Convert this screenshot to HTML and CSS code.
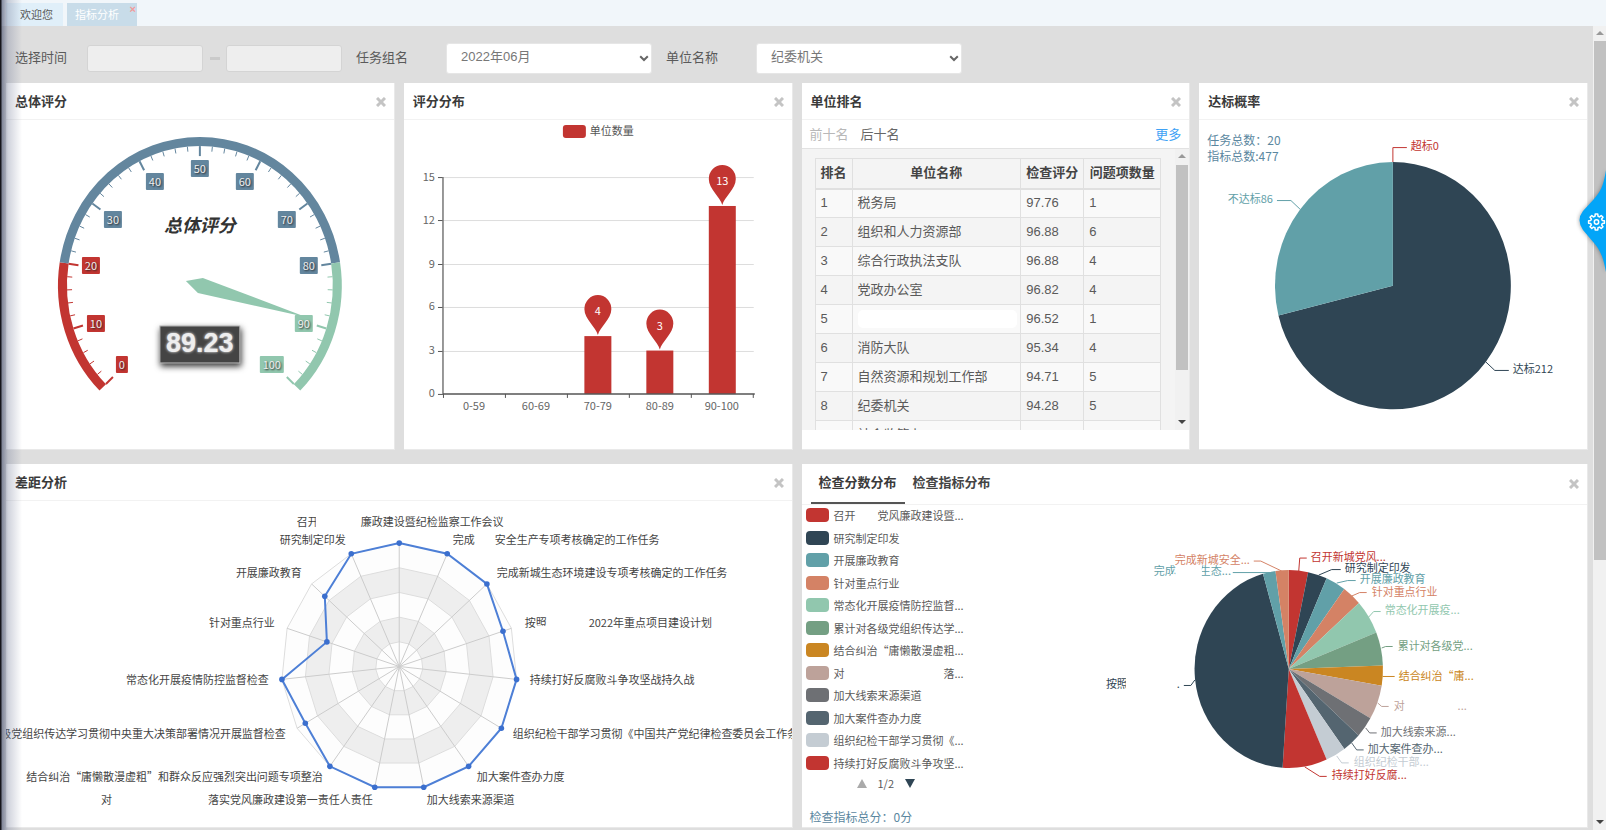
FILE: index.html
```html
<!DOCTYPE html>
<html lang="zh-CN">
<head>
<meta charset="utf-8">
<title>指标分析</title>
<link rel="stylesheet" href="styles.css">
</head>
<body>
<nav class="tabs">
  <button class="tab">欢迎您</button>
  <button class="tab tab-active">指标分析<span class="tab-close">×</span></button>
</nav>
<div class="frame">
  <main class="page">
    <form class="filters">
      <label class="f-label" for="from">选择时间</label>
      <input class="f-input" id="from" type="text">
      <span class="f-dash"></span>
      <input class="f-input" id="to" type="text" aria-label="结束时间">
      <label class="f-label f-label-wide" for="group">任务组名</label>
      <span class="select-wrap"><select class="f-select" id="group"><option>2022年06月</option></select><svg class="caret" viewBox="0 0 10 7"><path d="M1.2 1.2 5 5l3.8-3.8"/></svg></span>
      <label class="f-label f-label-wide" for="unit">单位名称</label>
      <span class="select-wrap"><select class="f-select" id="unit"><option>纪委机关</option></select><svg class="caret" viewBox="0 0 10 7"><path d="M1.2 1.2 5 5l3.8-3.8"/></svg></span>
    </form>

    <div class="grid">
      <section class="panel">
        <header class="head"><h2>总体评分</h2><button class="close" aria-label="关闭"><svg viewBox="0 0 10 10"><path d="M1 1l8 8M9 1 1 9"/></svg></button></header>
        <svg class="chart" id="gauge" viewBox="6 120 388 326"></svg>
      </section>

      <section class="panel">
        <header class="head"><h2>评分分布</h2><button class="close" aria-label="关闭"><svg viewBox="0 0 10 10"><path d="M1 1l8 8M9 1 1 9"/></svg></button></header>
        <svg class="chart" id="bars" viewBox="404 120 388 326"></svg>
      </section>

      <section class="panel">
        <header class="head"><h2>单位排名</h2><button class="close" aria-label="关闭"><svg viewBox="0 0 10 10"><path d="M1 1l8 8M9 1 1 9"/></svg></button></header>
        <div class="rank-bar">
          <button class="link-btn muted">前十名</button>
          <button class="link-btn">后十名</button>
          <a class="more" href="#">更多</a>
        </div>
        <div class="rank-body">
          <div class="rank-scroll">
            <table class="rank">
              <colgroup><col class="c1"><col><col class="c3"><col class="c4"></colgroup>
              <thead><tr><th>排名</th><th>单位名称</th><th>检查评分</th><th>问题项数量</th></tr></thead>
              <tbody>
                <tr><td>1</td><td>税务局</td><td>97.76</td><td>1</td></tr>
                <tr><td>2</td><td>组织和人力资源部</td><td>96.88</td><td>6</td></tr>
                <tr><td>3</td><td>综合行政执法支队</td><td>96.88</td><td>4</td></tr>
                <tr><td>4</td><td>党政办公室</td><td>96.82</td><td>4</td></tr>
                <tr><td>5</td><td><span class="blank"></span></td><td>96.52</td><td>1</td></tr>
                <tr><td>6</td><td>消防大队</td><td>95.34</td><td>4</td></tr>
                <tr><td>7</td><td>自然资源和规划工作部</td><td>94.71</td><td>5</td></tr>
                <tr><td>8</td><td>纪委机关</td><td>94.28</td><td>5</td></tr>
                <tr><td></td><td>社会监管办</td><td></td><td></td></tr>
              </tbody>
            </table>
          </div>
          <div class="bar"><i class="up"></i><i class="thumb thumb-rank"></i><i class="down"></i></div>
        </div>
      </section>

      <section class="panel">
        <header class="head"><h2>达标概率</h2><button class="close" aria-label="关闭"><svg viewBox="0 0 10 10"><path d="M1 1l8 8M9 1 1 9"/></svg></button></header>
        <div class="stacked">
          <p class="totals">任务总数：20<br>指标总数:477</p>
          <svg class="chart" id="rate" viewBox="1199 120 388 326"></svg>
        </div>
      </section>

      <section class="panel panel-wide panel-low">
        <header class="head"><h2>差距分析</h2><button class="close" aria-label="关闭"><svg viewBox="0 0 10 10"><path d="M1 1l8 8M9 1 1 9"/></svg></button></header>
        <svg class="chart" id="radar" viewBox="6 501 786 326"></svg>
      </section>

      <section class="panel panel-wide panel-low">
        <header class="head head-tabs">
          <button class="sub sub-active">检查分数分布</button>
          <button class="sub">检查指标分布</button>
          <button class="close" aria-label="关闭"><svg viewBox="0 0 10 10"><path d="M1 1l8 8M9 1 1 9"/></svg></button>
        </header>
        <div class="split">
          <div class="side">
            <ul class="legend" id="legend"></ul>
            <div class="pager"><i class="pg-up"></i><span>1/2</span><i class="pg-down"></i></div>
            <p class="sum">检查指标总分：0分</p>
          </div>
          <svg class="chart chart-pie" id="pie" viewBox="990 505 598 290"></svg>
        </div>
      </section>
    </div>
  </main>
  <div class="bar bar-page"><i class="up"></i><i class="thumb thumb-page"></i><i class="down"></i></div>
</div>
<div class="edge"></div>
<button class="drawer" aria-label="设置">
  <svg viewBox="1576 168 30 106">
    <path class="drawer-bg" d="M1606 170C1603 188 1600 192 1594 199L1583 211Q1576 220 1583 230L1594 243C1600 250 1603 256 1606 272Z"/>
    <g id="gear"></g>
  </svg>
</button>
<script src="charts.js"></script>
</body>
</html>
```
FILE: styles.css
```css
* { box-sizing: border-box; }
html, body { height: 100%; }
body {
  margin: 0;
  display: flex;
  flex-direction: column;
  overflow: hidden;
  background: #dedede;
  color: #5a5a5a;
  font: 13px/20px "Liberation Sans", "Noto Sans CJK SC", sans-serif;
}
button { border: 0; padding: 0; background: none; font: inherit; color: inherit; }
h2, p, ul { margin: 0; padding: 0; }

.tabs {
  flex: none;
  display: flex;
  align-items: flex-end;
  gap: 4px;
  height: 26px;
  padding-left: 6px;
  background: #f1f6fa;
}
.tab {
  position: relative;
  height: 23px;
  padding: 0 10px 0 14px;
  background: #e0eff9;
  font-size: 11px;
}
.tab-active { padding: 0 18px 0 8px; background: #c8dce9; color: #fff; }
.tab-close {
  position: absolute;
  top: 1px;
  right: 1px;
  color: #f39a9a;
  font-weight: bold;
  line-height: 11px;
}

.frame { flex: 1; min-height: 0; display: flex; }
.page { flex: 1; min-width: 0; padding: 0 5px 0 6px; overflow: hidden; }

.filters { display: flex; align-items: center; height: 57px; padding: 8px 0 1px 9px; }
.f-label { width: 72px; }
.f-label-wide { width: 90px; margin-left: 14px; }
.f-input {
  width: 116px;
  height: 27px;
  border: 1px solid #d4d4d4;
  border-radius: 3px;
  background: #eee;
}
.f-dash { width: 10px; height: 3px; margin: 0 6px 0 7px; background: #cacaca; }
.select-wrap { position: relative; display: flex; }
.f-select {
  width: 206px;
  height: 31px;
  padding: 0 14px 2px;
  border: 1px solid #e6e6e6;
  border-radius: 3px;
  background: #fff;
  color: #777;
  font: inherit;
  appearance: none;
}
.caret { position: absolute; right: 3px; top: 12px; width: 10px; height: 7px; fill: none; stroke: #666; stroke-width: 2; pointer-events: none; }

.grid { display: grid; grid-template-columns: repeat(4, minmax(0, 1fr)); gap: 14px 9px; }
.panel { height: 367px; background: #fff; border: 1px solid #e9e9e9; border-width: 0 1px 1px 0; overflow: hidden; }
.panel-low { height: 364px; }
.panel-wide { grid-column: span 2; }
.head {
  display: flex;
  align-items: center;
  justify-content: space-between;
  height: 37px;
  padding: 1px 8px 0 9px;
  border-bottom: 1px solid #f2f2f2;
}
.head h2 { font-size: 13px; color: #3a3a3a; }
.close { width: 10px; height: 10px; display: block; }
.close svg { display: block; fill: none; stroke: #c4c4c4; stroke-width: 3; }
.chart { display: block; width: 100%; height: 326px; }
.chart text { font-family: "Noto Sans CJK SC", "Noto Sans", sans-serif; font-size: 11px; dominant-baseline: central; }

.rank-bar { display: flex; align-items: center; gap: 12px; height: 29px; padding: 2px 8px 0; border-bottom: 1px solid #e2e2e2; color: #666; }
.muted { color: #b8b8b8; }
.more { margin-left: auto; color: #3fa2f5; text-decoration: none; }
.rank-body { display: flex; height: 281px; background: #f4f4f4; }
.rank-scroll { flex: 1; padding: 9px 14px 0 13px; overflow: hidden; }
.rank { width: 100%; table-layout: fixed; border-collapse: collapse; }
.c1 { width: 37px; }
.c3 { width: 63px; }
.c4 { width: 77px; }
.rank th, .rank td { height: 29px; padding: 0 5px; border: 1px solid #e0e0e0; text-align: left; white-space: nowrap; }
.rank th { height: 30px; text-align: center; color: #444; border-bottom-width: 2px; }
.rank tbody tr:nth-child(odd) { background: #f9f9f9; }
.blank { display: block; height: 18px; border-radius: 5px; background: #fff; margin-right: -2px; }

.bar { display: flex; flex-direction: column; align-items: center; width: 14px; padding: 5px 0 6px; background: #f1f1f1; }
.bar i { display: block; }
.up { border: 4px solid transparent; border-top: 0; border-bottom-color: #999; }
.down { margin-top: auto; border: 4px solid transparent; border-bottom: 0; border-top-color: #444; }
.thumb { width: 12px; background: #c1c1c1; }
.thumb-rank { height: 205px; margin-top: 7px; }
.thumb-page { height: 519px; margin-top: 6px; }
.bar-page { width: 13px; }

.stacked { display: grid; }
.stacked > * { grid-area: 1 / 1; }
.totals { padding: 12px 8px; font: 12px/16px "Noto Sans CJK SC", sans-serif; color: #5b87a0; }

.head-tabs { justify-content: flex-start; gap: 0; height: 41px; padding-top: 0; }
.sub { height: 40px; padding: 0 8px; font-weight: bold; color: #444; border-bottom: 2px solid transparent; }
.sub-active { border-bottom-color: #555; color: #3a3a3a; }
.head-tabs .close { margin-left: auto; }
.split { display: grid; grid-template-columns: 188px minmax(0, 1fr); }
.chart-pie { height: 290px; }
.side { font-family: "Noto Sans CJK SC", sans-serif; }
.legend { display: grid; grid-template-rows: repeat(12, 1fr); height: 270px; margin-top: -1px; list-style: none; font-size: 11px; }
.legend li { display: flex; align-items: center; gap: 5px; padding-left: 4px; white-space: pre; }
.swatch { width: 23px; height: 14px; border-radius: 4px; }
.pager { display: flex; align-items: center; gap: 11px; height: 18px; padding-left: 55px; font-size: 11px; }
.pg-up { border: 5px solid transparent; border-top: 0; border-bottom: 9px solid #aaa; }
.pg-down { border: 5px solid transparent; border-bottom: 0; border-top: 9px solid #2f4554; }
.sum { padding: 15px 8px 0; font-size: 12px; color: #5b87a0; }

.edge {
  position: absolute;
  inset: 0 auto 0 0;
  width: 22px;
  pointer-events: none;
  background: linear-gradient(90deg, #16161c 0, #16161c 1px, rgba(90, 98, 125, .7) 2px, rgba(120, 128, 155, .35) 8px, rgba(150, 158, 180, 0) 22px);
}
.drawer { position: absolute; right: 0; top: 168px; width: 30px; height: 106px; }
.drawer svg { display: block; width: 30px; height: 106px; }
.drawer-bg { fill: #03a5f8; filter: drop-shadow(0 0 2px rgba(0, 0, 0, .4)); }

.chart .value { font-family: "Liberation Sans", sans-serif; font-size: 27px; font-weight: bold; fill: #eee; text-shadow: 0 0 3px #fff; }
.value-box { fill: #444; stroke: #bbb; filter: drop-shadow(1px 3px 3px rgba(0, 0, 0, .8)); }
.chart .gauge-title { font-size: 18px; font-weight: bold; font-style: italic; fill: #333; }
.chart .gauge-num { fill: #eee; text-shadow: 1px 1px 2px #222; }
```
FILE: charts.js
```js
const PALETTE = ['#c23531', '#2f4554', '#61a0a8', '#d48265', '#91c7ae', '#749f83', '#ca8622', '#bda29a', '#6e7074', '#546570', '#c4ccd3', '#c23531', '#2f4554', '#61a0a8', '#d48265'];
const at = (cx, cy, rx, ry, deg) => {
  const a = deg * Math.PI / 180;
  return [(cx + rx * Math.sin(a)).toFixed(1), (cy - ry * Math.cos(a)).toFixed(1)];
};
const text = (x, y, s, fill, anchor = 'start', cls = '') =>
  `<text x="${x}" y="${y}" fill="${fill}" text-anchor="${anchor}" class="${cls}">${s}</text>`;
const line = (pts, color, w = 1) => `<polyline points="${pts}" fill="none" stroke="${color}" stroke-width="${w}"/>`;
const patch = (x, y, w, h) => `<rect x="${x}" y="${y}" width="${w}" height="${h}" fill="#fff"/>`;
const slice = (cx, cy, rx, ry, a, b, fill) =>
  `<path d="M${cx} ${cy}L${at(cx, cy, rx, ry, a)}A${rx} ${ry} 0 ${b - a > 180 ? 1 : 0} 1 ${at(cx, cy, rx, ry, b)}Z" fill="${fill}"/>`;
const put = (id, html) => { document.getElementById(id).innerHTML = html; };

function gauge() {
  const cx = 200, cy = 285.5;
  const color = v => v <= 20 ? '#c23531' : v <= 80 ? '#63869e' : '#91c7ae';
  const ang = v => -135 + v * 2.7;
  let out = '';
  for (const [a, b] of [[0, 20], [20, 80], [80, 100]]) {
    out += `<path d="M${at(cx, cy, 137.5, 144.2, ang(a))}A137.5 144.2 0 0 1 ${at(cx, cy, 137.5, 144.2, ang((a + b) / 2))}A137.5 144.2 0 0 1 ${at(cx, cy, 137.5, 144.2, ang(b))}" fill="none" stroke="${color(b)}" stroke-width="9"/>`;
  }
  for (let v = 0; v <= 100; v += 2) {
    const major = v % 10 === 0, len = major ? 10 : 5;
    out += line(`${at(cx, cy, 133, 139.5, ang(v))} ${at(cx, cy, 133 - len, 139.5 - len, ang(v))}`, color(v), major ? 2 : 1);
  }
  out += '<path d="M186 281L203 278L306 317L198 293Z" fill="#91c7ae"/>';
  [[0, 122, 365], [10, 96, 324], [20, 91, 266], [30, 113, 220], [40, 155, 182], [50, 200, 169], [60, 245, 182], [70, 287, 220], [80, 309, 266], [90, 304, 324], [100, 272, 365]].forEach(([v, x, y]) => {
    const w = v === 0 ? 12 : v === 100 ? 24 : 18;
    out += `<rect x="${x - w / 2}" y="${y - 9}" width="${w}" height="17" rx="1" fill="${color(v)}"/>` + text(x, y - 1, v, '#eee', 'middle', 'gauge-num');
  });
  out += text(200, 224, '总体评分', '#333', 'middle', 'gauge-title');
  out += '<rect class="value-box" x="160" y="326" width="80" height="37"/>' + text(200, 343, '89.23', '#eee', 'middle', 'value');
  put('gauge', out);
}

function bars() {
  const base = 394, unit = 14.467;
  let out = '<rect x="563" y="125" width="23" height="13" rx="3" fill="#c23531"/>' + text(590, 130, '单位数量', '#555');
  for (let v = 0; v <= 15; v += 3) {
    const y = Math.round(base - v * unit) + .5;
    if (v) out += line(`443,${y} 754,${y}`, '#ddd');
    out += line(`438,${y} 443,${y}`, '#555') + text(435, y - 2, v, '#666', 'end');
  }
  ['0-59', '60-69', '70-79', '80-89', '90-100'].forEach((s, i) => {
    out += text(474 + i * 62, 405, s, '#666', 'middle') + line(`${505.5 + i * 62},394 ${505.5 + i * 62},398`, '#555');
  });
  [[598, 4], [660, 3], [722.5, 13]].forEach(([x, v]) => {
    const top = base - v * unit, y = top - 27;
    out += `<rect x="${x - 13.5}" y="${top}" width="27" height="${v * unit}" fill="#c23531"/>`;
    out += `<path d="M${x} ${top - 1}C${x - 2} ${top - 9} ${x - 13.5} ${y + 10} ${x - 13.5} ${y}A13.5 14 0 1 1 ${x + 13.5} ${y}C${x + 13.5} ${y + 10} ${x + 2} ${top - 9} ${x} ${top - 1}Z" fill="#c23531"/>`;
    out += text(x, y + 1, v, '#fff', 'middle');
  });
  out += line('443,177 443,394', '#777', 1.5) + line('443,394 755,394', '#555', 1.5) + line('443.5,394 443.5,398', '#555');
  put('bars', out);
}

function rate() {
  const g = [1393, 285.7, 118, 123.7];
  put('rate', slice(...g, 0, 256.1, '#2f4554') + slice(...g, 256.1, 360, '#61a0a8')
    + line('1393,162 1393,147.5 1407,147.5', '#c23531') + text(1411, 145, '超标0', '#c23531')
    + line('1277,200.5 1291,200.5 1300,209', '#61a0a8') + text(1273, 198, '不达标86', '#61a0a8', 'end')
    + line('1486,362 1495,370.5 1509,370.5', '#2f4554') + text(1513, 368, '达标212', '#2f4554'));
}

function radar() {
  const cx = 399.5, cy = 666.5, rx = 118, ry = 123.5, n = 15;
  const values = [1, 1, 1, .925, 1, 1, 1, 1, 1, 1, .92, 1, .645, .85, 1];
  const ring = k => values.map((_, i) => at(cx, cy, rx * k, ry * k, i * 24)).join(' ');
  let out = '';
  [1, .8, .6, .4, .2].forEach((k, i) => { out += `<polygon points="${ring(k)}" fill="${i % 2 ? '#eee' : '#fdfdfd'}" stroke="#ddd"/>`; });
  for (let i = 0; i < n; i++) out += line(`${cx},${cy} ${at(cx, cy, rx, ry, i * 24)}`, '#ccc');
  const pts = values.map((v, i) => at(cx, cy, rx * v, ry * v, i * 24));
  out += `<polygon points="${pts.join(' ')}" fill="none" stroke="#4d7fd6" stroke-width="2"/>`;
  pts.forEach(([x, y]) => { out += `<circle cx="${x}" cy="${y}" r="2.8" fill="#3b6fce"/>`; });
  const c = '#444';
  [[297, 521, '召开'], [361, 521, '廉政建设暨纪检监察工作会议'], [453, 539, '完成'], [495, 539, '安全生产专项考核确定的工作任务'],
   [497, 572, '完成新城生态环境建设专项考核确定的工作任务'], [525, 622, '按照'], [589, 622, '2022年重点项目建设计划'],
   [530, 679, '持续打好反腐败斗争攻坚战持久战'], [513, 733, '组织纪检干部学习贯彻《中国共产党纪律检查委员会工作条'],
   [477, 776, '加大案件查办力度'], [427, 799, '加大线索来源渠道'], [101, 799, '对']].forEach(([x, y, s]) => { out += text(x, y, s, c); });
  [[346, 539, '研究制定印发'], [302, 572, '开展廉政教育'], [275, 622, '针对重点行业'], [269, 679, '常态化开展疫情防控监督检查'],
   [286, 733, '级党组织传达学习贯彻中央重大决策部署情况开展监督检查'], [323, 776, '结合纠治“庸懒散漫虚粗”和群众反应强烈突出问题专项整治'],
   [373, 799, '落实党风廉政建设第一责任人责任']].forEach(([x, y, s]) => { out += text(x, y, s, c, 'end'); });
  out += patch(316, 514, 6, 14) + patch(536, 626, 12, 4);
  put('radar', out);
}

function pie() {
  const cuts = [0, 11.9, 23.7, 36.1, 48.1, 68.3, 88, 99.7, 119.9, 132.2, 143.9, 156.3, 183.8, 344.1, 351.9, 360];
  let out = PALETTE.map((c, i) => slice(1289, 669, 94.3, 99, cuts[i], cuts[i + 1], c)).join('');
  [['1299,571 1300,558 1307,558', 1311, 556, '召开新城党风...'], ['1319,575 1332,569.5 1341,569.5', 1345, 567, '研究制定印发'],
   ['1337,583 1348,580.5 1356,580.5', 1360, 578, '开展廉政教育'], ['1352,596 1360,592.5 1367,592.5', 1372, 591, '针对重点行业'],
   ['1369,617 1374,611.5 1381,611.5', 1385, 609, '常态化开展疫...'], ['1382,648 1386,646.5 1393,646.5', 1398, 645, '累计对各级党...'],
   ['1383,676.5 1395,676.5', 1399, 675, '结合纠治“庸...'], ['1378,703 1382,706.5 1389,706.5', 1394, 705, '对'],
   ['1366,728 1370,733 1377,733', 1381, 731, '加大线索来源...'], ['1352,743 1357,750 1364,750', 1368, 748, '加大案件查办...'],
   ['1337,756 1342,763 1349,763', 1354, 761, '组织纪检干部...'], ['1305,767 1320,776.5 1327,776.5', 1332, 774, '持续打好反腐...'],
   ['1195,680 1191,685.5 1184,685.5', 1106, 683, '按照'], ['1233,572.5 1271,572.5', 1154, 570, '完成'],
   ['1254,561 1261,561 1282,571', 1175, 559, '完成新城安全...']].forEach(([pts, x, y, s], i) => {
    out += line(pts, PALETTE[i]) + text(x, y, s, PALETTE[i]);
  });
  out += text(1458, 705, '...', PALETTE[7]) + text(1200, 570, '生态...', PALETTE[13]) + text(1177, 683, '.', PALETTE[12]);
  out += patch(1171, 574, 5, 4) + patch(1199, 565, 3, 11) + patch(1126, 677, 3, 12);
  put('pie', out);

  put('legend', ['召开\u3000\u3000党风廉政建设暨...', '研究制定印发', '开展廉政教育', '针对重点行业', '常态化开展疫情防控监督...', '累计对各级党组织传达学...', '结合纠治“庸懒散漫虚粗...', '对\u3000\u3000\u3000\u3000\u3000\u3000\u3000\u3000\u3000落...', '加大线索来源渠道', '加大案件查办力度', '组织纪检干部学习贯彻《...', '持续打好反腐败斗争攻坚...']
    .map((s, i) => `<li><span class="swatch" style="background:${PALETTE[i]}"></span>${s}</li>`).join(''));
}

function gear() {
  const pts = [];
  for (let i = 0; i < 8; i++) {
    const a = i * 45;
    for (const [d, r] of [[-14, 6], [-9, 8], [9, 8], [14, 6]]) pts.push(at(1596.5, 222, r, r, a + d));
  }
  put('gear', `<polygon points="${pts.join(' ')}" fill="none" stroke="#fff" stroke-width="1.5" stroke-linejoin="round"/><circle cx="1596.5" cy="222" r="2.2" fill="none" stroke="#fff" stroke-width="1.5"/>`);
}

gauge(); bars(); rate(); radar(); pie(); gear();
```
